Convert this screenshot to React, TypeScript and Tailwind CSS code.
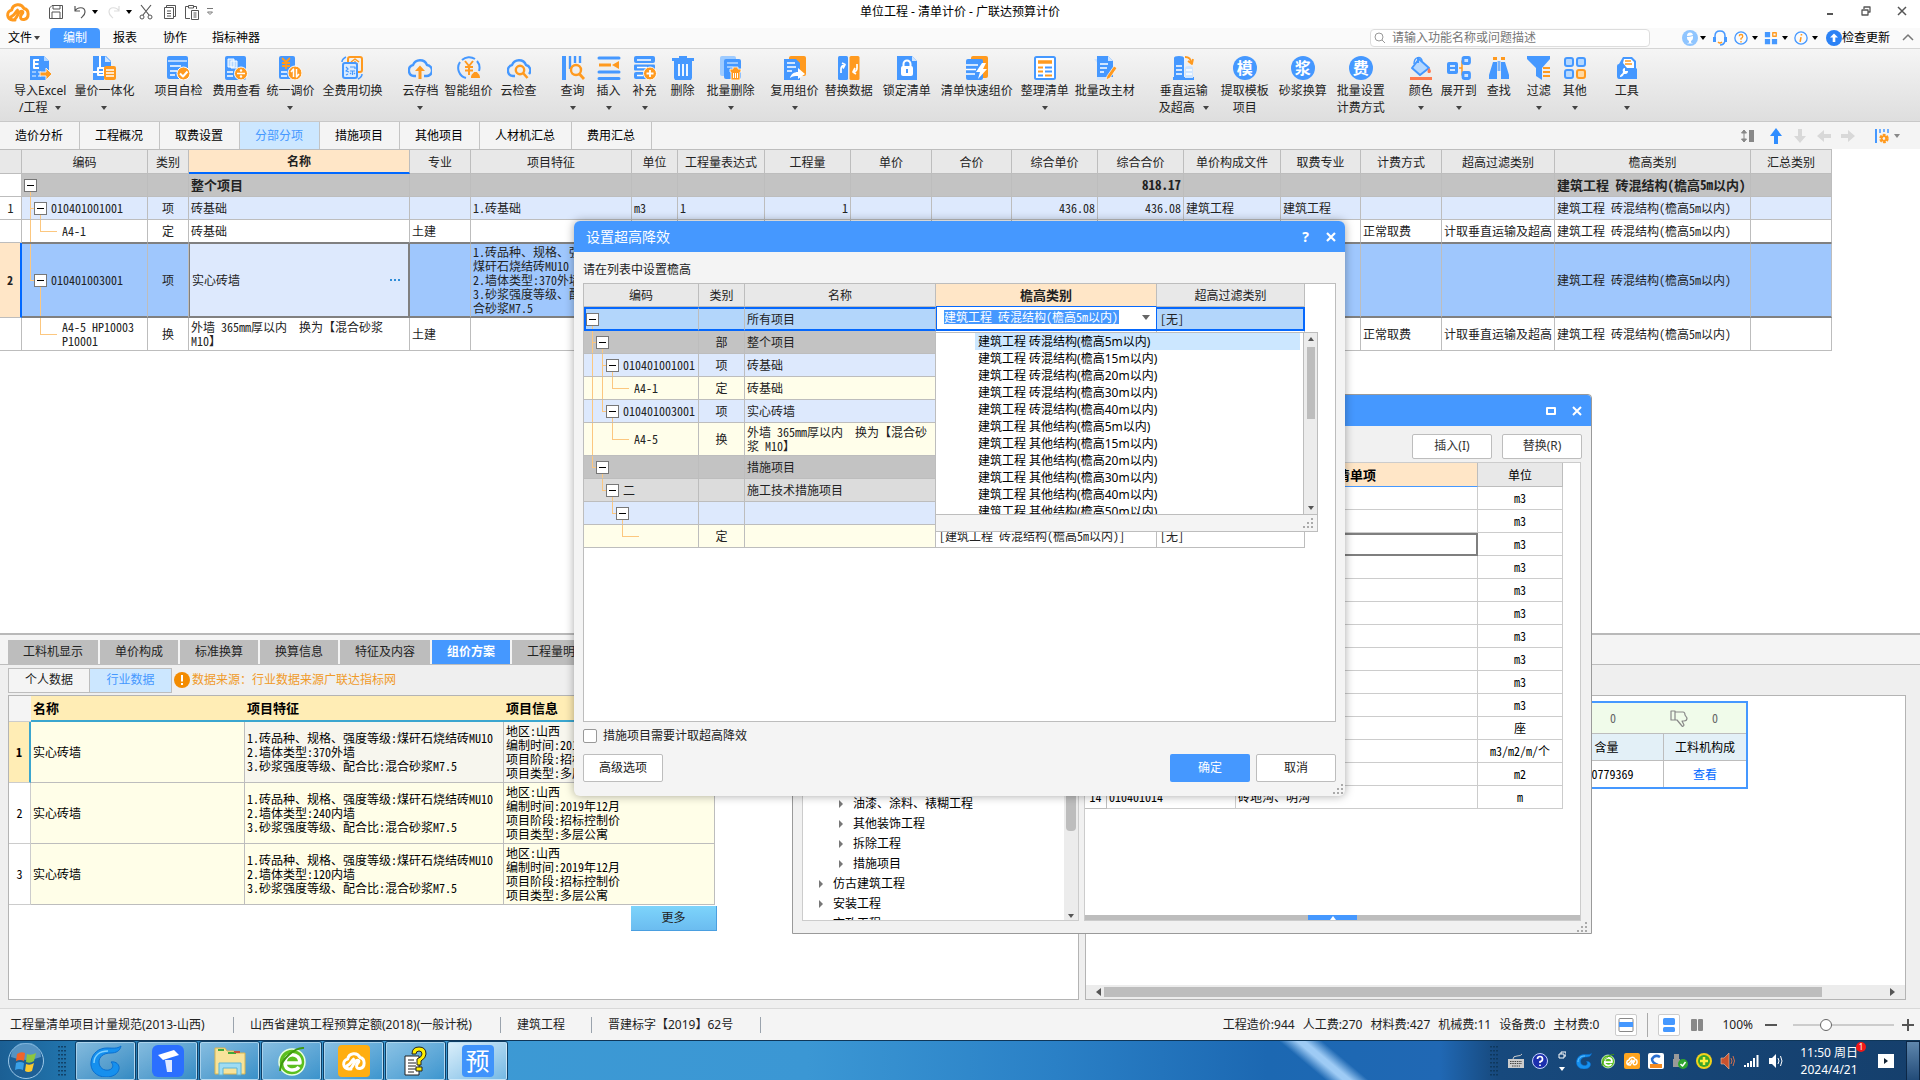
import { ReactNode } from 'react'

const BLUE = '#4598ff'
const ORANGE = '#ff9a1f'

const Caret = ({ className = 'text-[#444]' }: { className?: string }) => (
  <svg viewBox="0 0 6 4" className={`h-1 w-1.5 shrink-0 ${className}`}>
    <path d="M0 0h6L3 4z" fill="currentColor" />
  </svg>
)

const Svg = ({
  children,
  className = 'size-6',
  box = '0 0 24 24',
}: {
  children: ReactNode
  className?: string
  box?: string
}) => (
  <svg
    viewBox={box}
    className={`shrink-0 ${className}`}
    fill="none"
    strokeLinejoin="round"
  >
    {children}
  </svg>
)

const CloudMark = ({
  className,
  color = ORANGE,
}: {
  className?: string
  color?: string
}) => (
  <Svg className={className} box="0 0 24 20">
    <path
      d="M9 18H6.500a5 5 0 0 1-.8-9.900A6.500 6.500 0 0 1 18 6.500c5.500 1 5.500 10 0 11-3.500.5-4.500-2.500-2.500-5 1-1.200 2-2 1-3-1.300-1-3 .5-4 2-1.500 2.500-2.500 6.500-5.500 6.500-2.500 0-3-3-1-3.800 2-.8 3.500-4 5.500-6"
      stroke={color}
      strokeWidth="3"
      strokeLinecap="round"
    />
  </Svg>
)

const Round = ({ char }: { char: string }) => (
  <span className="flex size-6 items-center justify-center rounded-full bg-[#4598ff] text-base leading-6 font-bold text-white">
    {char}
  </span>
)

const ribbonIcons: Record<string, ReactNode> = {
  excel: (
    <Svg>
      <path d="M2 0h14l5 5v14l-3 5H2z" fill={BLUE} />
      <path d="M16 0v5h5z" fill="#b5d8ff" />
      <path d="M11 4H6v8h5M6 8h4.500" stroke="#fff" strokeWidth="2" />
      <path d="M4 16h4M4 20h4M10 16h3M10 20h3" stroke="#b5d8ff" strokeWidth="1.500" />
      <path d="M12 16h6v-4l6 6-6 6v-4h-6z" fill={ORANGE} stroke="#eee" />
    </Svg>
  ),
  both: (
    <Svg>
      <path d="M1 0h13l5 5v6h-7v13H1z" fill={BLUE} />
      <path d="M8 0v12M1 16h10M6 12h6v7H6z" stroke="#fff" strokeWidth="2" />
      <path d="M13 0v6h6z" fill="#cfe5ff" />
      <rect x="12" y="10" width="12" height="14" rx="2" fill={ORANGE} />
      <path d="M14 14h8M14 17h8M14 20h8" stroke="#fff" strokeWidth="1.500" />
    </Svg>
  ),
  check: (
    <Svg>
      <rect x="1" width="21" height="23" rx="2" fill={BLUE} />
      <path d="M2 5h19" stroke="#d9eaff" strokeWidth="1.500" />
      <path d="M4 10h11M4 15h7M4 19h5" stroke="#fff" strokeWidth="1.500" />
      <circle cx="17.500" cy="17.500" r="6.500" fill={ORANGE} stroke="#fff" />
      <path d="m14 17.500 3 3 4.500-5" stroke="#fff" strokeWidth="2" />
    </Svg>
  ),
  view: (
    <Svg>
      <rect x="1" width="21" height="24" rx="2" fill={BLUE} />
      <path d="M4 3h6v8H4zM7 5h6v7H7z" fill="#b5d8ff" stroke="#fff" />
      <path d="M3 16h6M3 20h6" stroke="#fff" strokeWidth="1.500" />
      <circle cx="17" cy="17.500" r="6.500" fill={ORANGE} stroke="#fff" />
      <path d="M13 17.500h8" stroke="#fff" strokeWidth="1.500" />
      <circle cx="17" cy="14.500" r="1.200" fill="#fff" />
      <circle cx="17" cy="20.500" r="1.200" fill="#fff" />
    </Svg>
  ),
  adjust: (
    <Svg>
      <rect x="1" width="16" height="23" rx="2" fill={BLUE} />
      <path d="m4 2 4 4 4-4M8 6v7M4 7h8M4 10h8" stroke={ORANGE} strokeWidth="1.800" />
      <path d="M3 16h6M3 20h6" stroke="#fff" strokeWidth="1.500" />
      <circle cx="17" cy="17" r="7" fill={ORANGE} stroke="#fff" />
      <path d="M15.500 21v-8l-2.500 3M18.500 13v8l2.500-3" stroke="#fff" strokeWidth="1.500" />
    </Svg>
  ),
  swap: (
    <Svg>
      <rect x="8" y="1" width="14" height="15" rx="2" stroke={ORANGE} strokeWidth="2" />
      <path d="m11 6 4-3 4 3M12 8h6M15 5v5" stroke={ORANGE} strokeWidth="1.500" />
      <rect x="3" y="7" width="14" height="15" rx="2" fill="#d9ebff" stroke={BLUE} strokeWidth="2" />
      <path d="M6 11l2 2-2 2 3 1M6 19l2-1M10 11h5v2M10 15h5M12.500 15v4M10 18l1-1M15 18l-1-1" stroke={BLUE} strokeWidth="1.200" />
      <path d="M2 6c0-2 2-4 4-5M22 18c0 2-2 4-4 5" stroke={BLUE} strokeWidth="1.500" />
    </Svg>
  ),
  cloudUp: (
    <Svg>
      <path d="M8 20H6A5.500 5.500 0 0 1 5 9.200 7.500 7.500 0 0 1 19 9a5.500 5.500 0 0 1-1 11h-2" stroke={BLUE} strokeWidth="2.400" />
      <path d="M12 9.500 17 15h-3.500v8h-3v-8H7z" fill={ORANGE} />
    </Svg>
  ),
  smart: (
    <Svg>
      <path d="M9 22A10.500 10.500 0 0 1 3 6M5 4a10.500 10.500 0 0 1 13-1M20 5a10.500 10.500 0 0 1 2 10" stroke={BLUE} strokeWidth="2" />
      <path d="m8 5 4 5 4-5M12 10v9M8 11h8M8 14.500h8" stroke={ORANGE} strokeWidth="2" />
      <path d="M14 22c0-4 2-4 3-6h3c1 2 3 2 3 6z" fill={ORANGE} />
    </Svg>
  ),
  cloudFind: (
    <Svg>
      <path d="M8 20H6A5.500 5.500 0 0 1 5 9.200 7.500 7.500 0 0 1 19 9a5.500 5.500 0 0 1 3 9" stroke={BLUE} strokeWidth="2.400" />
      <circle cx="13" cy="14" r="4.200" stroke={ORANGE} strokeWidth="2.400" />
      <path d="m16 17 4.500 5" stroke={ORANGE} strokeWidth="2.600" />
    </Svg>
  ),
  query: (
    <Svg>
      <path d="M3 0v24" stroke={BLUE} strokeWidth="4" />
      <path d="M9 0v13M14 0v7M19 0v7" stroke={BLUE} strokeWidth="2.400" />
      <circle cx="15" cy="14" r="5" stroke={ORANGE} strokeWidth="2.400" />
      <path d="m18.500 18 4.500 5" stroke={ORANGE} strokeWidth="2.800" />
    </Svg>
  ),
  insert: (
    <Svg>
      <path d="M2 2h20M2 16h20M2 22.500h20" stroke={BLUE} strokeWidth="3" strokeLinecap="round" />
      <path d="M2 9h12" stroke={ORANGE} strokeWidth="3" />
      <path d="m15 9 7-4v8z" fill={ORANGE} />
    </Svg>
  ),
  supply: (
    <Svg>
      <rect x="1" width="21" height="7" rx="2" fill={BLUE} />
      <rect x="1" y="8.500" width="21" height="6" rx="1" fill={BLUE} />
      <rect x="1" y="16" width="14" height="7" rx="2" fill={BLUE} />
      <path d="M4 4h14M4 11.500h10M4 19.500h6" stroke="#fff" strokeWidth="1.300" />
      <circle cx="17" cy="17.500" r="6.500" fill={ORANGE} stroke="#fff" />
      <path d="M13.500 17.500h7M17 14v7" stroke="#fff" strokeWidth="1.800" />
    </Svg>
  ),
  trash: (
    <Svg>
      <path d="M1 2h7V0h8v2h7v3H1zM3 5h18v17l-1 2H4l-1-2z" fill={BLUE} />
      <path d="M8 8v12M12 8v12M16 8v12" stroke="#fff" strokeWidth="1.800" />
    </Svg>
  ),
  trashMany: (
    <Svg>
      <rect x="1" width="16" height="20" rx="2" fill="#9ecbff" />
      <rect x="5" y="3" width="17" height="20" rx="2" fill={BLUE} />
      <path d="M8 7h11M8 11h6" stroke="#b5d8ff" strokeWidth="1.500" />
      <path d="M11 13h3v-2h5v2h3v3h-1v8h-9v-8h-1z" fill={ORANGE} stroke="#fff" strokeWidth=".8" />
      <path d="M14.500 17v5M16.500 17v5M18.500 17v5" stroke="#fff" />
    </Svg>
  ),
  reuse: (
    <Svg>
      <rect x="6" width="17" height="20" rx="2" fill={ORANGE} />
      <path d="M1 3h12l4 4v17H1z" fill={BLUE} />
      <path d="M4 7h8M4 11h9M4 15h5" stroke="#fff" strokeWidth="1.500" />
      <path d="M7 22c1-4 4-6 8-6v-4l7 6-7 5v-3c-3 0-5 0-8 2z" fill="#fff" />
    </Svg>
  ),
  replace: (
    <Svg>
      <rect x="1" width="10" height="24" rx="1.500" fill={BLUE} />
      <rect x="12.500" width="10" height="24" rx="1.500" fill={ORANGE} />
      <path d="M4 17v-4q0-3 3-4M5 7l3 1.500-2 4M20 8v4q0 3-3 4M19 18l-3-2 2-4" stroke="#fff" strokeWidth="1.700" />
    </Svg>
  ),
  lock: (
    <Svg>
      <path d="M2 0h15l5 5v19H2z" fill={BLUE} />
      <path d="M17 0v5h5z" fill="#cfe5ff" />
      <rect x="6" y="10" width="12" height="10" rx="2" fill="#fff" />
      <path d="M8.500 11V8a3.500 3.500 0 0 1 7 0v3" stroke="#fff" strokeWidth="2" />
      <path d="M12 13v4" stroke={BLUE} strokeWidth="2" />
    </Svg>
  ),
  fast: (
    <Svg>
      <rect x="6" width="17" height="22" rx="2" fill={ORANGE} />
      <rect x="1" y="3" width="17" height="21" rx="2" fill={BLUE} />
      <path d="M1 9h12M1 13.500h10M1 18h9" stroke="#fff" strokeWidth="1.500" />
      <path d="m17 7-6 9h4l-2 7 9-10h-4l3-6z" fill="#fff" />
    </Svg>
  ),
  tidy: (
    <Svg>
      <rect x="2" y="1" width="20" height="22" rx="1.500" fill="#fff" stroke={BLUE} strokeWidth="2" />
      <path d="M5 6h14" stroke={ORANGE} strokeWidth="3.500" />
      <path d="M5 11.500h5M5 15.500h5M12 19.500h7" stroke={ORANGE} strokeWidth="1.800" />
      <path d="M12 11.500h7M12 15.500h7M5 19.500h5" stroke={BLUE} strokeWidth="1.800" />
    </Svg>
  ),
  edit: (
    <Svg>
      <path d="M1 3h3v21h12v-3" fill="#cfe5ff" />
      <path d="M4 0h11l5 5v16H4z" fill={BLUE} />
      <path d="M15 0v5h5z" fill="#cfe5ff" />
      <path d="M7 8h8M7 12h7M7 16h4" stroke="#fff" strokeWidth="1.500" />
      <path d="m21 10 3 2-7 10-4 2 1-4z" fill={ORANGE} stroke="#fff" strokeWidth=".7" />
    </Svg>
  ),
  vertical: (
    <Svg>
      <path d="M2 2q0-2 5-2t5 2v20H2zM1 21h21v3H1z" fill={BLUE} />
      <path d="M4 10h6M4 14h6M4 18h6" stroke="#fff" strokeWidth="1.500" />
      <path d="M13 12q0-2 4-2t4 2v10h-8z" fill="#cfe5ff" />
      <path d="M14 14h6M14 18h6" stroke="#fff" strokeWidth="1.500" />
      <path d="M13 1c4 0 6 2 6 6M16 5l4 3 1-5" stroke={ORANGE} strokeWidth="1.800" />
    </Svg>
  ),
  mo: <Round char="模" />,
  jiang: <Round char="浆" />,
  fei: <Round char="费" />,
  paint: (
    <Svg>
      <path d="M9 1v6M10 3l10 9-9 7-8-7z" fill="#b5d8ff" stroke={BLUE} strokeWidth="2" />
      <path d="M5 8c0-8 8-8 8-3" stroke={BLUE} strokeWidth="1.500" />
      <path d="M20 12c3 3 2 5 0 5s-2-2 0-5z" fill="#ff7a4d" />
      <path d="M1 22.500h22" stroke="#ff7a4d" strokeWidth="3" />
    </Svg>
  ),
  expand: (
    <Svg>
      <path d="M12 12h3V5h3M15 12v7h3" stroke={ORANGE} strokeWidth="1.500" />
      <rect y="6" width="11" height="12" rx="2" fill={BLUE} />
      <path d="M3 10h5M3 14h5" stroke="#fff" strokeWidth="1.300" />
      <rect x="16" y="1.500" width="6.500" height="6" rx="1" fill="#cfe5ff" stroke={BLUE} strokeWidth="2.800" />
      <rect x="16" y="16.500" width="6.500" height="6" rx="1" fill="#cfe5ff" stroke={BLUE} strokeWidth="2.800" />
    </Svg>
  ),
  find: (
    <Svg>
      <path d="M6 6h4v17H2v-4zM14 6h4l4 13v4h-8z" fill={BLUE} />
      <path d="M11.200 5v10M12.800 5v10" stroke={BLUE} />
      <path d="M6 2.500h4M14 2.500h4" stroke={ORANGE} strokeWidth="3" />
    </Svg>
  ),
  filter: (
    <Svg>
      <path d="M0 0h23v3l-8 9v12l-6-4v-8L0 3z" fill={BLUE} />
      <path d="M16 12h7M16 16h7M16 20h7" stroke={ORANGE} strokeWidth="2" />
    </Svg>
  ),
  other: (
    <Svg>
      <g fill="#b5d8ff" stroke={BLUE} strokeWidth="2">
        <rect x="2" y="2" width="8" height="8" rx="2" />
        <rect x="14" y="2" width="8" height="8" rx="2" />
        <rect x="2" y="14" width="8" height="8" rx="2" />
      </g>
      <rect x="14" y="14" width="8" height="8" rx="2" fill="#ffd9a3" stroke={ORANGE} strokeWidth="2" />
    </Svg>
  ),
  tools: (
    <Svg>
      <path d="M8 1h9l4 4v7l1 1v10H4q-2 0-2-3V10q0-2 2-2z" fill={BLUE} />
      <path d="M9 3h7l3 3v6h-7l-4-5z" fill="#fff" />
      <path d="M10 5h6M10 8h7" stroke={ORANGE} strokeWidth="1.500" />
      <path d="M5 21c0-3 2-2 3-5-1-2 0-4 2-4v3h3c0 3-2 3-4 3-1 2-2 3-4 3z" fill="#fff" />
    </Svg>
  ),
}

type RibbonItem = {
  icon: string
  label: string
  second?: string
  menu?: boolean
  gap: string
}

const ribbon: RibbonItem[] = [
  { icon: 'excel', label: '导入Excel', second: '/工程', menu: true, gap: 'ml-3.5' },
  { icon: 'both', label: '量价一体化', menu: true, gap: 'ml-2' },
  { icon: 'check', label: '项目自检', gap: 'ml-5' },
  { icon: 'view', label: '费用查看', gap: 'ml-2.5' },
  { icon: 'adjust', label: '统一调价', menu: true, gap: 'ml-1.5' },
  { icon: 'swap', label: '全费用切换', gap: 'ml-2' },
  { icon: 'cloudUp', label: '云存档', menu: true, gap: 'ml-5' },
  { icon: 'smart', label: '智能组价', gap: 'ml-1.5' },
  { icon: 'cloudFind', label: '云检查', gap: 'ml-2' },
  { icon: 'query', label: '查询', menu: true, gap: 'ml-6' },
  { icon: 'insert', label: '插入', menu: true, gap: 'ml-3' },
  { icon: 'supply', label: '补充', menu: true, gap: 'ml-3' },
  { icon: 'trash', label: '删除', gap: 'ml-3.5' },
  { icon: 'trashMany', label: '批量删除', menu: true, gap: 'ml-3' },
  { icon: 'reuse', label: '复用组价', menu: true, gap: 'ml-4' },
  { icon: 'replace', label: '替换数据', gap: 'ml-1.5' },
  { icon: 'lock', label: '锁定清单', gap: 'ml-2.5' },
  { icon: 'fast', label: '清单快速组价', gap: 'ml-2.5' },
  { icon: 'tidy', label: '整理清单', menu: true, gap: 'ml-2' },
  { icon: 'edit', label: '批量改主材', gap: 'ml-1.5' },
  { icon: 'vertical', label: '垂直运输', second: '及超高', menu: true, gap: 'ml-6' },
  { icon: 'mo', label: '提取模板', second: '项目', gap: 'ml-3' },
  { icon: 'jiang', label: '砂浆换算', gap: 'ml-2.5' },
  { icon: 'fei', label: '批量设置', second: '计费方式', gap: 'ml-2.5' },
  { icon: 'paint', label: '颜色', menu: true, gap: 'ml-6' },
  { icon: 'expand', label: '展开到', menu: true, gap: 'ml-2' },
  { icon: 'find', label: '查找', gap: 'ml-2.5' },
  { icon: 'filter', label: '过滤', menu: true, gap: 'ml-4' },
  { icon: 'other', label: '其他', menu: true, gap: 'ml-3' },
  { icon: 'tools', label: '工具', menu: true, gap: 'ml-7' },
]

const TitleBar = () => (
  <header className="relative flex h-7 shrink-0 items-center bg-white pb-1 pl-1.5 text-[#555]">
    <CloudMark className="h-5 w-6" />
    <div className="ml-[18px] flex items-center">
      <button aria-label="保存">
        <Svg className="size-4" box="0 0 16 16">
          <path d="M1.500 4 4 1.500h10.500v13h-13zM4 14V8h8v6M5 2v3h7V2" stroke="currentColor" />
        </Svg>
      </button>
      <button aria-label="撤销" className="ml-2 flex items-center gap-1">
        <Svg className="size-4" box="0 0 16 16">
          <path d="M3 2v5h5M3 7c2-4 10-5 10 1 0 3-2 4-4 6" stroke="currentColor" strokeWidth="1.200" />
        </Svg>
        <Caret className="text-black" />
      </button>
      <button aria-label="重做" className="ml-2 flex items-center gap-1">
        <Svg className="size-4 text-[#ddd]" box="0 0 16 16">
          <path d="M13 2v5H8M13 7c-2-4-10-5-10 1 0 3 2 4 4 6" stroke="currentColor" strokeWidth="1.200" />
        </Svg>
        <Caret className="text-black" />
      </button>
      <button aria-label="剪切" className="ml-1.5">
        <Svg className="size-4" box="0 0 16 16">
          <path d="M3 1l8 10M13 1 5 11" stroke="currentColor" strokeWidth="1.200" />
          <circle cx="4" cy="13" r="2" stroke="currentColor" />
          <circle cx="12" cy="13" r="2" stroke="currentColor" />
        </Svg>
      </button>
      <button aria-label="复制" className="ml-2">
        <Svg className="size-4" box="0 0 16 16">
          <path d="M4.500 3V1.500h9v11H12M2.500 3.500h9v11h-9zM5 7h4M5 9.500h4M5 12h4" stroke="currentColor" />
        </Svg>
      </button>
      <button aria-label="粘贴" className="ml-1.5">
        <Svg className="size-4" box="0 0 16 16">
          <path d="M6 14.500H1.500v-12H4m6 0h2.500V5M4.500 4V1.500h5V4zM7.500 6.500h7v9h-7zM9.500 9h3M9.500 11h3M9.500 13h3" stroke="currentColor" />
        </Svg>
      </button>
      <button aria-label="更多工具" className="ml-1">
        <Svg className="size-3" box="0 0 12 12">
          <path d="M3 2.500h6M3.500 6 6 8.500 8.500 6z" stroke="#777" />
        </Svg>
      </button>
    </div>
    <h1 className="pointer-events-none absolute inset-x-0 top-1 text-center text-black">
      单位工程 - 清单计价 - 广联达预算计价
    </h1>
    <div className="ml-auto flex items-center gap-6 pr-3 pb-0.5">
      <button aria-label="最小化">
        <Svg className="size-3" box="0 0 12 12">
          <path d="M3 9h6" stroke="currentColor" strokeWidth="2" />
        </Svg>
      </button>
      <button aria-label="还原">
        <Svg className="size-3" box="0 0 12 12">
          <path d="M4 4V2h6v5H8M2 5h6v5H2z" stroke="currentColor" strokeWidth="1.300" />
        </Svg>
      </button>
      <button aria-label="关闭">
        <Svg className="size-3" box="0 0 12 12">
          <path d="m2 2 8 8M10 2l-8 8" stroke="currentColor" strokeWidth="1.500" />
        </Svg>
      </button>
    </div>
  </header>
)

const MenuBar = () => (
  <nav className="flex h-[21px] shrink-0 items-center border-b border-[#d5d5d5] bg-[#fafafa] text-black">
    <button className="flex w-[50px] items-center gap-0.5 pl-2">
      文件 <Caret />
    </button>
    <button className="h-5 w-[50px] rounded-t-sm bg-[#4598ff] text-white">编制</button>
    <button className="w-[50px]">报表</button>
    <button className="w-[50px]">协作</button>
    <button className="ml-3">指标神器</button>
    <div className="ml-auto flex items-center">
      <label className="flex h-[18px] w-[280px] items-center gap-1.5 rounded-sm border border-[#ddd] bg-white pl-[3px] text-[#999]">
        <Svg className="size-3" box="0 0 12 12">
          <circle cx="5" cy="5" r="4" stroke="currentColor" />
          <path d="m8 8 3 3" stroke="currentColor" />
        </Svg>
        <input
          type="search"
          aria-label="搜索功能"
          placeholder="请输入功能名称或问题描述"
          className="w-full bg-transparent outline-none placeholder:text-[#777]"
        />
      </label>
      <button aria-label="用户" className="ml-8 flex items-center gap-0.5">
        <Svg className="size-4" box="0 0 16 16">
          <circle cx="8" cy="8" r="8" fill="#8fc5ff" />
          <path d="M5 6q0-3.500 3-3.500T11 6v2q0 2-2 3v1.500l2 1H5l2-1V11Q5 10 5 8z" fill="#fff" />
          <path d="M5 6.500q3 0 6-1" stroke="#8fc5ff" />
        </Svg>
        <Caret className="text-black" />
      </button>
      <button aria-label="客服" className="ml-1.5">
        <Svg className="size-4" box="0 0 16 16">
          <path d="M3 9V6q0-5 5-5t5 5v5q-1 4-5 4" stroke={BLUE} strokeWidth="1.500" />
          <path d="M1 7h3v5H1zM12 7h3v5h-3z" fill={BLUE} />
          <path d="M6 12q2 2 4 0" stroke={ORANGE} strokeWidth="1.500" />
        </Svg>
      </button>
      <button aria-label="帮助" className="ml-1.5 flex items-center gap-1">
        <Svg className="size-3.5" box="0 0 16 16">
          <circle cx="8" cy="8" r="7" stroke={BLUE} strokeWidth="1.500" />
          <path d="M6 6q0-2 2-2t2 2-2 2.500V10M8 11.500V13" stroke={ORANGE} strokeWidth="1.500" />
        </Svg>
        <Caret className="text-black" />
      </button>
      <button aria-label="应用" className="ml-1.5 flex items-center gap-1">
        <Svg className="size-3.5" box="0 0 16 16">
          <path d="M1 1h6v6H1zM1 9h6v6H1zM9 9h6v6H9z" fill={BLUE} />
          <path d="M10 2h4v4h-4z" stroke={ORANGE} strokeWidth="1.500" />
        </Svg>
        <Caret className="text-black" />
      </button>
      <button aria-label="信息" className="ml-1.5 flex items-center gap-1">
        <Svg className="size-3.5" box="0 0 16 16">
          <circle cx="8" cy="8" r="7" stroke={BLUE} strokeWidth="1.500" />
          <path d="M8.500 3.500V5M8 7l-1 5.500" stroke={ORANGE} strokeWidth="1.800" />
        </Svg>
        <Caret className="text-black" />
      </button>
      <button className="ml-2 flex items-center">
        <Svg className="size-4" box="0 0 16 16">
          <circle cx="8" cy="8" r="8" fill="#2c82f5" />
          <path d="m8 3.500 4 4H9.300V12H6.700V7.500H4z" fill="#fff" />
        </Svg>
        检查更新
      </button>
      <button aria-label="收起" className="mr-1.5 ml-3">
        <Svg className="size-3" box="0 0 12 12">
          <path d="m1 8 5-5 5 5" stroke="#777" strokeWidth="1.500" />
        </Svg>
      </button>
    </div>
  </nav>
)

const Ribbon = () => (
  <div className="flex h-[73px] shrink-0 items-start border-b border-[#c8c8c8] bg-linear-to-b from-[#f5f5f5] to-[#dedede] pt-[7px]">
    {ribbon.map((item) => (
      <button
        key={item.label}
        className={`flex shrink-0 flex-col items-center leading-[17px] whitespace-nowrap text-[#222] ${item.gap}`}
      >
        {ribbonIcons[item.icon]}
        <span className="mt-0.5">{item.label}</span>
        {(item.second || item.menu) && (
          <span className="flex h-[17px] items-center gap-2">
            {item.second}
            {item.menu && <Caret />}
          </span>
        )}
      </button>
    ))}
  </div>
)

const pages = ['造价分析', '工程概况', '取费设置', '分部分项', '措施项目', '其他项目', '人材机汇总', '费用汇总']

const PageTabs = () => (
  <div className="flex h-[27px] shrink-0 items-stretch bg-[#f4f4f4] text-black">
    {pages.map((page) => (
      <button
        key={page}
        className={`border-r border-[#c4c4c4] pr-4 pl-[15px] ${
          page === '分部分项' ? 'bg-[#cce7ff] text-[#4598ff]' : ''
        }`}
      >
        {page}
      </button>
    ))}
    <div className="ml-auto flex items-center gap-2 pr-5">
      <button aria-label="行高">
        <Svg className="size-4" box="0 0 16 16">
          <path d="M4 2v12M1.500 5 4 2l2.500 3zM1.500 11 4 14l2.500-3z" stroke="#888" fill="#888" />
          <path d="M9 2h5v12H9z" fill="#888" />
        </Svg>
      </button>
      <button aria-label="上移" className="ml-1">
        <Svg className="size-4" box="0 0 16 16">
          <path d="m8 0 6 8h-4v8H6V8H2z" fill="#2f8dff" />
        </Svg>
      </button>
      <button aria-label="下移">
        <Svg className="size-4" box="0 0 16 16">
          <path d="m8 15 6-7h-4V1H6v7H2z" fill="#d8d8d8" />
        </Svg>
      </button>
      <button aria-label="升级">
        <Svg className="size-4" box="0 0 16 16">
          <path d="m1 8 7-6v4h7v4H8v4z" fill="#d8d8d8" />
        </Svg>
      </button>
      <button aria-label="降级">
        <Svg className="size-4" box="0 0 16 16">
          <path d="M15 8 8 2v4H1v4h7v4z" fill="#d8d8d8" />
        </Svg>
      </button>
      <button aria-label="列设置" className="ml-2.5 flex items-center gap-1">
        <Svg className="size-4" box="0 0 16 16">
          <path d="M2 1v14" stroke={BLUE} strokeWidth="2" />
          <path d="M6 1v4M10 1v3M14 1v4" stroke={BLUE} strokeWidth="1.500" />
          <circle cx="10" cy="10.500" r="3" stroke={ORANGE} strokeWidth="3.500" strokeDasharray="2.200 1" />
          <circle cx="10" cy="10.500" r="2.500" stroke={ORANGE} strokeWidth="1.500" />
        </Svg>
        <Caret className="text-[#888]" />
      </button>
    </div>
  </div>
)

type Guide = 'none' | 'full' | 'tee' | 'corner'

interface TreeCodeProps {
  guides: Guide[]
  leaf?: boolean
  children?: ReactNode
}

// One 10px slot per level; the branch line of a level runs down the slot's left edge
const TreeCode = ({ guides, leaf, children }: TreeCodeProps) => (
  <div className="flex h-full items-stretch pl-2">
    {guides.map((guide, i) => (
      <span
        key={i}
        className={`flex shrink-0 flex-col ${leaf && i === guides.length - 1 ? 'w-[17px]' : 'w-2.5'}`}
      >
        <span
          className={`flex-1 border-[#fcc77f] ${guide === 'none' ? '' : 'border-l'} ${
            guide === 'tee' || guide === 'corner' ? 'border-b' : ''
          }`}
        />
        <span
          className={`flex-1 border-[#fcc77f] ${guide === 'full' || guide === 'tee' ? 'border-l' : ''}`}
        />
      </span>
    ))}
    {!leaf && (
      <span className="-ml-1.5 flex w-[13px] shrink-0 flex-col items-center">
        <span className="flex-1" />
        <button
          aria-label="折叠"
          className="flex size-[13px] shrink-0 items-center justify-center border border-[#777] bg-white"
        >
          <span className="h-px w-[7px] bg-black" />
        </button>
        <span className="flex-1 border-l border-[#fcc77f]" />
      </span>
    )}
    <span className={`self-center leading-[14px] ${leaf ? 'ml-[5px]' : 'ml-1'}`}>{children}</span>
  </div>
)

type Col = { key: string; title: string; width: string; align?: string }

const cols: Col[] = [
  { key: 'no', title: '', width: 'w-[22px]', align: 'text-center' },
  { key: 'code', title: '编码', width: 'w-[126px]' },
  { key: 'kind', title: '类别', width: 'w-[41px]', align: 'text-center' },
  { key: 'name', title: '名称', width: 'w-[221px]' },
  { key: 'major', title: '专业', width: 'w-[61px]' },
  { key: 'feature', title: '项目特征', width: 'w-[161px]' },
  { key: 'unit', title: '单位', width: 'w-[46px]' },
  { key: 'expr', title: '工程量表达式', width: 'w-[87px]' },
  { key: 'qty', title: '工程量', width: 'w-[86px]', align: 'text-right' },
  { key: 'price', title: '单价', width: 'w-[81px]' },
  { key: 'total', title: '合价', width: 'w-[80px]' },
  { key: 'fullPrice', title: '综合单价', width: 'w-[86px]', align: 'text-right' },
  { key: 'fullTotal', title: '综合合价', width: 'w-[86px]', align: 'text-right' },
  { key: 'file', title: '单价构成文件', width: 'w-[97px]' },
  { key: 'feeMajor', title: '取费专业', width: 'w-[80px]' },
  { key: 'feeWay', title: '计费方式', width: 'w-[81px]' },
  { key: 'overFilter', title: '超高过滤类别', width: 'w-[113px]' },
  { key: 'eaves', title: '檐高类别', width: 'w-[196px]' },
  { key: 'sumKind', title: '汇总类别', width: 'w-[81px]' },
]

const EAVES = '建筑工程 砖混结构(檐高5m以内)'

type Row = {
  look: string
  height: string
  selected?: boolean
  cells: Record<string, ReactNode>
}

const rows: Row[] = [
  {
    look: 'bg-[#c3c3c3] font-bold text-[13px]',
    height: 'h-[23px]',
    cells: {
      code: <TreeCode guides={[]} />,
      name: '整个项目',
      fullTotal: '818.17',
      eaves: EAVES,
    },
  },
  {
    look: 'bg-[#dde9fd]',
    height: 'h-[23px]',
    cells: {
      no: '1',
      code: <TreeCode guides={['tee']}>010401001001</TreeCode>,
      kind: '项',
      name: '砖基础',
      feature: '1.砖基础',
      unit: 'm3',
      expr: '1',
      qty: '1',
      fullPrice: '436.08',
      fullTotal: '436.08',
      file: '建筑工程',
      feeMajor: '建筑工程',
      eaves: EAVES,
    },
  },
  {
    look: 'bg-white border-b-[#808080]!',
    height: 'h-[23px]',
    cells: {
      code: <TreeCode guides={['full', 'corner']} leaf>A4-1</TreeCode>,
      kind: '定',
      name: '砖基础',
      major: '土建',
      feeWay: '正常取费',
      overFilter: '计取垂直运输及超高',
      eaves: EAVES,
    },
  },
  {
    look: 'bg-[#9fc7fd] border-y-[#808080]! border-t border-b-2!',
    height: 'h-[75px]',
    selected: true,
    cells: {
      no: '2',
      code: <TreeCode guides={['corner']}>010401003001</TreeCode>,
      kind: '项',
      name: (
        <span className="flex items-center justify-between pr-1.5">
          实心砖墙
          <button aria-label="编辑名称" className="flex gap-0.5">
            <i className="size-0.5 bg-[#2f8dd8]" />
            <i className="size-0.5 bg-[#2f8dd8]" />
            <i className="size-0.5 bg-[#2f8dd8]" />
          </button>
        </span>
      ),
      feature: (
        <span className="block leading-[14px] whitespace-pre">
          {'1.砖品种、规格、强度等级:\n煤矸石烧结砖MU10\n2.墙体类型:370外墙\n3.砂浆强度等级、配合比:混\n合砂浆M7.5'}
        </span>
      ),
      eaves: EAVES,
    },
  },
  {
    look: 'bg-white',
    height: 'h-[33px]',
    cells: {
      code: (
        <TreeCode guides={['none', 'corner']} leaf>
          A4-5 HP10003
          <br />
          P10001
        </TreeCode>
      ),
      kind: '换',
      name: (
        <span className="block leading-[14px] whitespace-pre">
          {'外墙 365mm厚以内　换为【混合砂浆\nM10】'}
        </span>
      ),
      major: '土建',
      feeWay: '正常取费',
      overFilter: '计取垂直运输及超高',
      eaves: EAVES,
    },
  },
]

const cellLook = (row: Row, key: string) => {
  if (key === 'no') {
    return row.selected
      ? 'bg-[#ffe6c7] font-bold border-b border-[#bdbdbd] border-r-2 border-r-[#0068ff]'
      : 'bg-white border-b border-r border-[#bdbdbd]'
  }
  if (key === 'name' && row.selected) {
    return 'bg-[#dde9fd] border-2 border-t border-l border-[#808080]'
  }
  return `border-r border-b border-[#bdbdbd] ${row.look}`
}

const MainTable = () => (
  <table className="w-[1832px] table-fixed border-separate border-spacing-0 border-t border-[#bdbdbd] text-[#222] [font-family:'Noto_Sans_Mono_CJK_SC','Noto_Sans_CJK_SC',sans-serif]">
    <thead>
      <tr>
        {cols.map((col) => (
          <th
            key={col.key}
            className={`h-6 border-r border-[#bdbdbd] p-0 ${col.width} ${
              col.key === 'name'
                ? 'border-b-2 border-b-[#0068ff] bg-[#ffe6c7] font-bold'
                : 'border-b bg-[#e8e8e8] font-normal'
            }`}
          >
            {col.title}
          </th>
        ))}
      </tr>
    </thead>
    <tbody>
      {rows.map((row, i) => (
        <tr key={i}>
          {cols.map((col) => (
            <td
              key={col.key}
              className={`overflow-hidden py-0 whitespace-nowrap ${row.height} ${col.align ?? ''} ${
                ['code', 'no', 'kind'].includes(col.key) ? 'px-0' : 'px-0.5'
              } ${cellLook(row, col.key)}`}
            >
              {row.cells[col.key]}
            </td>
          ))}
        </tr>
      ))}
    </tbody>
  </table>
)

const detailTabs = ['工料机显示', '单价构成', '标准换算', '换算信息', '特征及内容', '组价方案', '工程量明细']

const plans = [
  { wall: '370外墙', info: '地区:山西\n编制时间:2019年12月\n项目阶段:招标控制价\n项目类型:多层公寓' },
  { wall: '240内墙', info: '地区:山西\n编制时间:2019年12月\n项目阶段:招标控制价\n项目类型:多层公寓' },
  { wall: '120内墙', info: '地区:山西\n编制时间:2019年12月\n项目阶段:招标控制价\n项目类型:多层公寓' },
]

const PlanTable = () => (
  <table className="w-[706px] table-fixed border-separate border-spacing-0 text-black [font-family:'Noto_Sans_Mono_CJK_SC','Noto_Sans_CJK_SC',sans-serif]">
    <thead>
      <tr className="text-left text-[13px] font-bold">
        <th className="h-[26px] w-[22px] border-b border-[#ccc] bg-[#f4f4f4] p-0" />
        <th className="w-[214px] border-b-2 border-[#3ba6cf] bg-[#ffedb5] p-0 pl-0.5">名称</th>
        <th className="w-[259px] border-b-2 border-[#3ba6cf] bg-[#ffedb5] p-0 pl-0.5">项目特征</th>
        <th className="w-[211px] border-b-2 border-[#3ba6cf] bg-[#ffedb5] p-0 pl-0.5">项目信息</th>
      </tr>
    </thead>
    <tbody>
      {plans.map((plan, i) => {
        const first = i === 0
        return (
          <tr key={plan.wall}>
            <td
              className={`h-[61px] border-b border-[#ccc] p-0 text-center ${
                first ? 'border-r-2 border-r-[#3ba6cf] bg-[#ffedb5] font-bold' : 'border-r'
              }`}
            >
              {i + 1}
            </td>
            <td className="border-r border-b border-[#bdbdbd] bg-[#fffee8] p-0 pl-0.5">实心砖墙</td>
            <td
              className={`border-r border-b border-[#bdbdbd] p-0 pl-0.5 leading-[14px] whitespace-pre ${
                first ? 'bg-[#f7f6ee]' : 'bg-[#fffee8]'
              }`}
            >
              {`1.砖品种、规格、强度等级:煤矸石烧结砖MU10\n2.墙体类型:${plan.wall}\n3.砂浆强度等级、配合比:混合砂浆M7.5`}
            </td>
            <td
              className={`border-r border-b border-[#bdbdbd] p-0 pl-0.5 leading-[14px] whitespace-pre ${
                first ? 'bg-[#f7f6ee]' : 'bg-[#fffee8]'
              }`}
            >
              {plan.info}
            </td>
          </tr>
        )
      })}
    </tbody>
  </table>
)

const QuotaCard = () => (
  <table className="mt-[5px] ml-[380px] w-[282px] table-fixed border-separate border-spacing-0 border-2 border-[#4598ff] text-center text-black [font-family:'Noto_Sans_Mono_CJK_SC','Noto_Sans_CJK_SC',sans-serif]">
    <colgroup>
      <col className="w-[82px]" />
      <col className="w-[114px]" />
      <col className="w-[82px]" />
    </colgroup>
    <thead>
      <tr>
        <td className="h-[31px] border-b border-[#bdbdbd] bg-[#f0fbea]" />
        <td colSpan={2} className="border-b border-[#bdbdbd] bg-[#f0fbea] p-0 text-[#666]">
          <span className="flex items-center justify-end pr-7">
            0
            <Svg className="mr-6 ml-[54px] size-[18px]" box="0 0 18 18">
              <path d="M1 2h4v9H1zM5 3h8q2 0 2 3l2 3q0 3-3 3h-2l2 4q-1 2-2 1L7 11H5" stroke="#888" strokeWidth="1.200" />
            </Svg>
            0
          </span>
        </td>
      </tr>
      <tr className="bg-[#e3f0f7]">
        <th className="h-[27px] border-b border-[#bdbdbd]" />
        <th className="border-r border-b border-[#bdbdbd] p-0 font-normal">含量</th>
        <th className="border-b border-[#bdbdbd] p-0 font-normal">工料机构成</th>
      </tr>
    </thead>
    <tbody>
      <tr>
        <td className="h-[26px]" />
        <td className="border-r border-[#bdbdbd] p-0">0.0779369</td>
        <td className="p-0">
          <a href="#view" className="text-[#0068ff]">
            查看
          </a>
        </td>
      </tr>
    </tbody>
  </table>
)

const DetailPane = () => (
  <section className="flex h-[375px] shrink-0 flex-col border-t-2 border-[#b9b9b9] bg-[#efefef]">
    <div className="flex h-[30px] shrink-0 items-end gap-0.5 border-b border-[#bdbdbd] bg-[#f4f4f4] pl-2 text-[#222]">
      {detailTabs.map((tab) => (
        <button
          key={tab}
          className={`h-6 px-[15px] ${
            tab === '组价方案' ? 'bg-[#4598ff] font-bold text-white' : 'bg-[#bdbdbd]'
          }`}
        >
          {tab}
        </button>
      ))}
    </div>
    <div className="flex h-[30px] shrink-0 items-center pl-2">
      <button className="h-[25px] w-[82px] border border-[#bdbdbd] bg-[#f4f4f4] text-[#222]">个人数据</button>
      <button className="h-[25px] w-[82px] border border-l-0 border-[#bdbdbd] bg-[#cce7ff] text-[#4598ff]">
        行业数据
      </button>
      <Svg className="mr-0.5 ml-0.5 size-4" box="0 0 16 16">
        <circle cx="8" cy="8" r="8" fill="#f38b00" />
        <path d="M8 3v6.500M8 11v2" stroke="#fff" strokeWidth="2" />
      </Svg>
      <span className="text-[#f09a28]">数据来源：行业数据来源广联达指标网</span>
    </div>
    <div className="flex min-h-0 flex-1 gap-1.5 pr-3.5 pb-2 pl-2">
      <div className="flex w-[1071px] flex-col items-start border border-[#b4b4b4] bg-white">
        <PlanTable />
        <button className="mt-px ml-[622px] h-[25px] w-[86px] border-r border-b border-[#4a9fe0] bg-linear-to-b from-[#7dd4fb] to-[#6bbcf0] text-[#222]">
          更多
        </button>
      </div>
      <div className="flex min-w-0 flex-1 flex-col justify-between border border-[#b4b4b4] bg-white">
        <QuotaCard />
        <div className="flex h-3.5 items-center gap-0.5 bg-[#ececec] px-2.5">
          <Svg className="h-2 w-1.5" box="0 0 6 8">
            <path d="M5 0v8L0 4z" fill="#555" />
          </Svg>
          <div className="flex h-2.5 flex-1">
            <span className="w-11/12 bg-[#bdbdbd]" />
          </div>
          <Svg className="h-2 w-1.5" box="0 0 6 8">
            <path d="M1 0v8l5-4z" fill="#555" />
          </Svg>
        </div>
      </div>
    </div>
  </section>
)

const Grip = () => (
  <Svg className="size-2.5" box="0 0 10 10">
    <path d="M8 0h2v2H8zM4 4h2v2H4zM8 4h2v2H8zM0 8h2v2H0zM4 8h2v2H4zM8 8h2v2H8z" fill="#aaa" />
  </Svg>
)

const treeItems = [
  { label: '油漆、涂料、裱糊工程', sub: true },
  { label: '其他装饰工程', sub: true },
  { label: '拆除工程', sub: true },
  { label: '措施项目', sub: true },
  { label: '仿古建筑工程' },
  { label: '安装工程' },
  { label: '市政工程' },
]

const units = ['m3', 'm3', 'm3', 'm3', 'm3', 'm3', 'm3', 'm3', 'm3', 'm3', '座', 'm3/m2/m/个', 'm2', 'm']

const QueryWindow = () => (
  <section className="absolute top-[394px] left-[792px] flex h-[540px] w-[800px] flex-col rounded-tr border border-[#9a9a9a] bg-[#f1f1f1]">
    <div className="flex h-[31px] shrink-0 items-center justify-end gap-3.5 rounded-tr bg-[#4598ff] pr-2">
      <button aria-label="最大化">
        <Svg className="size-3" box="0 0 12 12">
          <path d="M2 3h8v6H2z" stroke="#fff" strokeWidth="2" />
        </Svg>
      </button>
      <button aria-label="关闭查询">
        <Svg className="size-3" box="0 0 12 12">
          <path d="m2 2 8 8M10 2l-8 8" stroke="#fff" strokeWidth="2" />
        </Svg>
      </button>
    </div>
    <div className="flex h-9 shrink-0 items-center justify-end gap-2.5 pt-1 pr-[9px] text-[#333]">
      <button className="h-[25px] w-20 rounded-xs border border-[#bdbdbd] bg-white">插入(I)</button>
      <button className="h-[25px] w-20 rounded-xs border border-[#bdbdbd] bg-white">替换(R)</button>
    </div>
    <div className="flex min-h-0 flex-1 gap-[5px] pr-2.5 pl-[9px]">
      <div className="flex w-[277px] border border-[#ccc] bg-white">
        <ul className="flex flex-1 flex-col justify-end overflow-hidden text-black">
          {treeItems.map((item) => (
            <li
              key={item.label}
              className={`flex h-5 shrink-0 items-center gap-2.5 last:-mb-3.5 ${
                item.sub ? 'pl-9' : 'pl-4'
              }`}
            >
              <Svg className="h-2 w-1" box="0 0 4 8">
                <path d="M0 0v8l4-4z" fill="#777" />
              </Svg>
              {item.label}
            </li>
          ))}
        </ul>
        <div className="flex w-3.5 flex-col items-center justify-between bg-[#ececec] pb-0.5">
          <span className="h-[368px] w-2.5 rounded-b bg-[#bdbdbd]" />
          <Caret className="text-[#555]" />
        </div>
      </div>
      <div className="flex flex-1 flex-col justify-between border border-[#ccc] bg-white">
        <table className="w-[478px] table-fixed border-separate border-spacing-0 text-center text-black [font-family:'Noto_Sans_Mono_CJK_SC','Noto_Sans_CJK_SC',sans-serif]">
          <thead>
            <tr>
              <th className="h-6 w-[22px] border-r border-b border-[#bdbdbd] bg-[#e8e8e8] p-0" />
              <th className="w-[129px] border-r border-b border-[#bdbdbd] bg-[#e8e8e8] p-0 font-normal" />
              <th className="w-[242px] border-r border-b border-[#bdbdbd] border-b-[#4598ff] bg-[#ffe6c7] p-0 text-[13px] font-bold">
                清单项
              </th>
              <th className="w-[85px] border-r border-b border-[#bdbdbd] bg-[#e8e8e8] p-0 font-normal">单位</th>
            </tr>
          </thead>
          <tbody>
            {units.map((unit, i) => (
              <tr key={i}>
                <td className="h-[23px] border-r border-b border-[#bdbdbd] p-0">{i === 13 ? '14' : ''}</td>
                <td className="border-r border-b border-[#ccc] p-0 pl-0.5 text-left">
                  {i === 13 ? '010401014' : ''}
                </td>
                <td
                  className={`p-0 pl-0.5 text-left ${
                    i === 2 ? 'border-2 border-[#7f7f7f]' : 'border-r border-b border-[#ccc]'
                  }`}
                >
                  {i === 13 ? '砖地沟、明沟' : ''}
                </td>
                <td className="border-r border-b border-[#ccc] p-0">{unit}</td>
              </tr>
            ))}
          </tbody>
        </table>
        <div className="flex h-[5px] justify-center bg-[#bdbdbd]">
          <span className="flex w-[49px] items-center justify-center bg-[#4598ff]">
            <Caret className="rotate-180 text-white" />
          </span>
        </div>
      </div>
    </div>
    <div className="flex h-3 shrink-0 items-center justify-end pr-1">
      <Grip />
    </div>
  </section>
)

const eavesOptions = [
  '建筑工程 砖混结构(檐高5m以内)',
  '建筑工程 砖混结构(檐高15m以内)',
  '建筑工程 砖混结构(檐高20m以内)',
  '建筑工程 砖混结构(檐高30m以内)',
  '建筑工程 砖混结构(檐高40m以内)',
  '建筑工程 其他结构(檐高5m以内)',
  '建筑工程 其他结构(檐高15m以内)',
  '建筑工程 其他结构(檐高20m以内)',
  '建筑工程 其他结构(檐高30m以内)',
  '建筑工程 其他结构(檐高40m以内)',
  '建筑工程 其他结构(檐高50m以内)',
]

type DialogRow = {
  look: string
  code: ReactNode
  kind?: string
  name?: ReactNode
  eaves?: string
  over?: string
  tall?: boolean
}

const dialogRows: DialogRow[] = [
  { look: 'bg-[#c3c3c3]', code: <TreeCode guides={['tee']} />, kind: '部', name: '整个项目' },
  {
    look: 'bg-[#dde9fd]',
    code: <TreeCode guides={['full', 'tee']}>010401001001</TreeCode>,
    kind: '项',
    name: '砖基础',
  },
  {
    look: 'bg-[#fffeea]',
    code: <TreeCode guides={['full', 'full', 'corner']} leaf>A4-1</TreeCode>,
    kind: '定',
    name: '砖基础',
  },
  {
    look: 'bg-[#dde9fd]',
    code: <TreeCode guides={['full', 'corner']}>010401003001</TreeCode>,
    kind: '项',
    name: '实心砖墙',
  },
  {
    look: 'bg-[#fffeea]',
    code: <TreeCode guides={['full', 'none', 'corner']} leaf>A4-5</TreeCode>,
    kind: '换',
    name: <span className="block leading-[14px] whitespace-pre">{'外墙 365mm厚以内　换为【混合砂\n浆 M10】'}</span>,
    tall: true,
  },
  { look: 'bg-[#c3c3c3]', code: <TreeCode guides={['corner']} />, name: '措施项目' },
  {
    look: 'bg-[#dcdcdc]',
    code: <TreeCode guides={['none', 'corner']}>二</TreeCode>,
    name: '施工技术措施项目',
  },
  { look: 'bg-[#dde9fd]', code: <TreeCode guides={['none', 'none', 'corner']} /> },
  {
    look: 'bg-[#fffeea]',
    code: <TreeCode guides={['none', 'none', 'none', 'corner']} leaf />,
    kind: '定',
    eaves: '[建筑工程 砖混结构(檐高5m以内)]',
    over: '[无]',
  },
]

const EavesDropdown = () => (
  <div className="absolute top-12 left-[351px] z-10 w-[383px] border border-[#bdbdbd] bg-white">
    <div className="flex h-[181px]">
      <ul
        role="listbox"
        aria-label="檐高类别"
        className="mr-[3px] flex-1 overflow-hidden pl-[39px] leading-[17px] text-black"
      >
        {eavesOptions.map((option, i) => (
          <li
            key={option}
            role="option"
            aria-selected={i === 0}
            className={`h-[17px] pl-[3px] whitespace-nowrap ${i === 0 ? 'bg-[#cce7ff]' : ''}`}
          >
            {option}
          </li>
        ))}
      </ul>
      <div className="flex w-3.5 flex-col items-center border-l border-[#bdbdbd] bg-[#ececec] py-1">
        <Caret className="rotate-180 text-[#555]" />
        <span className="mt-1.5 h-[72px] w-2 bg-[#bdbdbd]" />
        <span className="flex-1" />
        <Caret className="text-[#555]" />
      </div>
    </div>
    <div className="flex h-[17px] items-center justify-end border-t border-[#bdbdbd] bg-[#f4f4f4] pr-1">
      <Grip />
    </div>
  </div>
)

const OverHeightDialog = () => {
  const rowBorder = 'border-r border-b border-[#bdbdbd]'
  const active = 'border-y-2 border-y-[#0568fd] border-r border-r-[#bdbdbd]'

  return (
    <section
      role="dialog"
      aria-label="设置超高降效"
      className="absolute top-[221px] left-[574px] flex h-[575px] w-[771px] flex-col rounded-md bg-[#f4f4f4] shadow-[0_0_10px_rgba(0,0,0,0.35)]"
    >
      <div className="flex h-[31px] shrink-0 items-center rounded-t-md bg-[#4598ff] px-3 text-sm text-white">
        <h2 className="flex-1">设置超高降效</h2>
        <button aria-label="帮助" className="mr-4 font-bold">
          ?
        </button>
        <button aria-label="关闭对话框" className="-mr-1">
          <Svg className="size-3" box="0 0 12 12">
            <path d="m2 2 8 8M10 2l-8 8" stroke="#fff" strokeWidth="2.200" />
          </Svg>
        </button>
      </div>
      <p className="h-[31px] shrink-0 pl-[9px] leading-9 text-[#222]">请在列表中设置檐高</p>
      <div className="relative mx-[9px] min-h-0 flex-1 border border-[#bdbdbd] bg-white">
        <table className="w-[721px] table-fixed border-separate border-spacing-0 text-[#222] [font-family:'Noto_Sans_Mono_CJK_SC','Noto_Sans_CJK_SC',sans-serif]">
          <thead>
            <tr className="bg-[#e8e8e8]">
              <th className={`h-[23px] w-[115px] p-0 font-normal ${rowBorder}`}>编码</th>
              <th className={`w-[46px] p-0 font-normal ${rowBorder}`}>类别</th>
              <th className={`w-[191px] p-0 font-normal ${rowBorder}`}>名称</th>
              <th className={`w-[221px] border-b-[#0568fd]! bg-[#ffe6c7] p-0 text-[13px] font-bold ${rowBorder}`}>
                檐高类别
              </th>
              <th className={`w-[148px] p-0 font-normal ${rowBorder}`}>超高过滤类别</th>
            </tr>
          </thead>
          <tbody>
            <tr className="bg-[#b3d6fb]">
              <td className={`h-6 border-l-2 border-l-[#0568fd] p-0 ${active}`}>
                <div className="-ml-0.5 h-full">
                  <TreeCode guides={[]} />
                </div>
              </td>
              <td className={`p-0 ${active}`} />
              <td className={`p-0 pl-0.5 ${active}`}>所有项目</td>
              <td className="border-r border-b-2 border-l border-[#0568fd] bg-white p-0">
                <div className="flex items-center justify-between pr-1.5 pb-0.5 pl-[7px]">
                  <input
                    type="text"
                    aria-label="檐高"
                    defaultValue={EAVES}
                    className="h-3.5 w-[175px] bg-[#4598ff] text-white outline-none"
                  />
                  <button aria-label="展开">
                    <Svg className="size-2" box="0 0 8 8">
                      <path d="M0 2h8L4 7z" fill="#666" />
                    </Svg>
                  </button>
                </div>
              </td>
              <td className="border-2 border-l-0 border-[#0568fd] p-0 pl-[3px]">[无]</td>
            </tr>
            {dialogRows.map((row, i) => (
              <tr key={i} className={row.look}>
                <td className={`p-0 ${row.tall ? 'h-[33px]' : 'h-[23px]'} ${rowBorder}`}>{row.code}</td>
                <td className={`p-0 text-center ${rowBorder}`}>{row.kind}</td>
                <td className={`p-0 pl-0.5 ${rowBorder}`}>{row.name}</td>
                <td className={`bg-white p-0 pl-[3px] whitespace-nowrap ${rowBorder}`}>{row.eaves}</td>
                <td className={`bg-white p-0 pl-[3px] ${rowBorder}`}>{row.over}</td>
              </tr>
            ))}
          </tbody>
        </table>
        <EavesDropdown />
      </div>
      <label className="flex h-7 shrink-0 items-center gap-1.5 pl-[9px] text-[#222]">
        <input
          type="checkbox"
          className="size-3.5 appearance-none rounded-xs border border-[#999] bg-white"
        />
        措施项目需要计取超高降效
      </label>
      <div className="flex shrink-0 gap-1.5 px-[9px] pt-1 text-[#222]">
        <button className="mr-auto h-7 w-20 rounded-xs border border-[#bdbdbd] bg-white">高级选项</button>
        <button className="h-7 w-20 rounded-xs bg-[#4598ff] text-white">确定</button>
        <button className="h-7 w-20 rounded-xs border border-[#bdbdbd] bg-white">取消</button>
      </div>
      <div className="flex h-3.5 shrink-0 items-center justify-end pr-0.5">
        <Grip />
      </div>
    </section>
  )
}

const costs = ['工程造价:944', '人工费:270', '材料费:427', '机械费:11', '设备费:0', '主材费:0']

const StatusBar = () => (
  <footer className="flex h-8 shrink-0 items-center border-t border-[#d8d8d8] bg-[#f4f4f4] whitespace-nowrap text-[#222]">
    <span className="w-[234px] border-r border-[#9aa3ad] pl-2.5">工程量清单项目计量规范(2013-山西)</span>
    <span className="w-[267px] border-r border-[#9aa3ad] pl-4">山西省建筑工程预算定额(2018)(一般计税)</span>
    <span className="w-[91px] border-r border-[#9aa3ad] pl-4">建筑工程</span>
    <span className="w-[169px] border-r border-[#9aa3ad] pl-4">晋建标字【2019】62号</span>
    <div className="ml-auto flex items-center gap-2">
      {costs.map((cost) => (
        <span key={cost}>{cost}</span>
      ))}
      <button aria-label="单栏" className="ml-2 flex h-[22px] w-[22px] items-center justify-center rounded-xs border border-[#ccc] bg-white">
        <Svg className="size-4" box="0 0 16 16">
          <rect x="1" y="1.500" width="14" height="13" rx="1" stroke="#888" />
          <path d="M1 5h14v5H1z" fill={BLUE} />
        </Svg>
      </button>
      <span className="mx-0.5 h-6 border-r border-[#aaa]" />
      <button aria-label="上下布局" className="flex h-[22px] w-[22px] items-center justify-center rounded-xs border border-[#ccc] bg-white">
        <Svg className="size-3.5" box="0 0 14 14">
          <rect width="12" height="7" rx="1.500" y="0" x="1" fill={BLUE} />
          <rect width="12" height="5" rx="1.500" y="9" x="1" fill={BLUE} />
        </Svg>
      </button>
      <button aria-label="左右布局" className="ml-0.5">
        <Svg className="size-3.5" box="0 0 14 14">
          <rect width="6" height="12" rx="1" y="1" x="1" fill="#888" />
          <rect width="5" height="12" rx="1" y="1" x="8" fill="#888" />
        </Svg>
      </button>
      <span className="ml-2.5">100%</span>
      <button aria-label="缩小" className="ml-1">
        <Svg className="size-3" box="0 0 12 12">
          <path d="M0 6h12" stroke="#555" strokeWidth="2" />
        </Svg>
      </button>
      <input
        type="range"
        aria-label="缩放"
        min={0}
        max={100}
        defaultValue={30}
        className="ml-2 h-3 w-[101px] appearance-none bg-[linear-gradient(#ccc,#ccc)] bg-[length:100%_2px] bg-center bg-no-repeat [&::-webkit-slider-thumb]:size-3 [&::-webkit-slider-thumb]:appearance-none [&::-webkit-slider-thumb]:rounded-full [&::-webkit-slider-thumb]:border [&::-webkit-slider-thumb]:border-[#666] [&::-webkit-slider-thumb]:bg-white"
      />
      <button aria-label="放大" className="mr-1.5">
        <Svg className="size-3" box="0 0 12 12">
          <path d="M0 6h12M6 0v12" stroke="#555" strokeWidth="2" />
        </Svg>
      </button>
    </div>
  </footer>
)

const GMark = ({ className }: { className: string }) => (
  <Svg className={className} box="0 0 32 32">
    <path
      d="M31 1c-1 5-5 7-10 7-8 0-12 4-12 9 0 6 5 9 10 8 4-1 5-5 2-8 5-1 9 3 8 7-1 5-6 8-13 8C6 32 0 25 1 17 2 8 9 3 17 3c6 0 10 1 14-2z"
      fill="#1690ee"
      stroke="#0a6fd0"
    />
    <path d="M4 18C4 10 10 6 18 6" stroke="#7fd0ff" strokeWidth="1.500" />
  </Svg>
)

const EMark = ({ className }: { className: string }) => (
  <Svg className={className} box="0 0 32 32">
    <circle cx="16" cy="17" r="13" fill="#5bbf1e" stroke="#e8ffe0" strokeWidth="1.500" />
    <path d="M8 18h16c0-11-15-11-15 0 0 8 10 9 14 4" stroke="#fff" strokeWidth="3.500" />
    <path d="M4 26C4 14 20 2 28 3" stroke="#3f9a10" strokeWidth="2" />
  </Svg>
)

const tasks: { name: string; icon: ReactNode }[] = [
  { name: '广联达', icon: <GMark className="size-8" /> },
  {
    name: '同步',
    icon: (
      <Svg className="size-8" box="0 0 32 32">
        <rect width="32" height="32" rx="6" fill="#2b6fff" />
        <path d="M6 10 22 5l5 5-16 5z" fill="#fff" />
        <path d="M13 15h7v12h-5z" fill="#dfe9ff" />
      </Svg>
    ),
  },
  {
    name: '资源管理器',
    icon: (
      <Svg className="size-8" box="0 0 32 32">
        <path d="M1 8V3h10l2 3h7l1 2h10v21H1z" fill="#f7e39a" stroke="#d9b54f" />
        <path d="M4 5h6M14 8h8" stroke="#3fa83a" strokeWidth="2" />
        <path d="M20 7h6" stroke="#c9533a" strokeWidth="2" />
        <path d="M5 30V18h22v12h-4v-7H9v7z" fill="#9fdcf3" stroke="#5cb4d8" />
      </Svg>
    ),
  },
  { name: '浏览器', icon: <EMark className="size-8" /> },
  {
    name: '云计价',
    icon: (
      <span className="flex size-8 items-center justify-center rounded bg-[#ffae10]">
        <CloudMark className="h-5 w-6" color="#fff" />
      </span>
    ),
  },
  {
    name: '帮助',
    icon: (
      <Svg className="size-8" box="0 0 32 32">
        <path d="M5 11h14v19H5z" fill="#fff" stroke="#222" />
        <path d="M8 15h6M8 18h8M8 21h8M8 24h8M8 27h6" stroke="#222" />
        <path d="M12 9q0-7 7-7t7 7q0 4-5 7v4h-4v-6q5-2 5-5 0-3-3-3t-3 3zM16 22h6v4h-6z" fill="#ffee00" stroke="#222" />
      </Svg>
    ),
  },
  {
    name: '预算',
    icon: (
      <span className="flex size-8 items-center justify-center rounded bg-[#3f93fb] text-2xl text-white">
        预
      </span>
    ),
  },
]

const Dots = () => (
  <Svg className="h-8 w-2" box="0 0 8 32">
    <path
      d="M1 1v30M4 1v30M7 1v30"
      stroke="#0c3354"
      strokeWidth="1.500"
      strokeDasharray="1.500 2.500"
    />
  </Svg>
)

const Tray = () => (
  <div className="ml-auto flex items-center gap-2 text-white">
    <Dots />
    <Svg className="ml-0.5 size-4" box="0 0 16 16">
      <path d="M0 6h16v9H0z" fill="#ccc" />
      <path d="M2 8.500h12M2 10.500h12M4 13h8" stroke="#444" strokeDasharray="1.500 .8" />
      <path d="M5 6q0-3 4-3t5-2" stroke="#ccc" />
    </Svg>
    <Svg className="size-4" box="0 0 16 16">
      <circle cx="8" cy="8" r="7.500" fill="#1c2fae" stroke="#c6d3ff" />
      <path d="M5.500 6q0-2.500 2.500-2.500T10.500 6 8 8.500V10M8 11.500v1.500" stroke="#fff" strokeWidth="1.700" />
    </Svg>
    <span className="flex w-3 flex-col items-center gap-2">
      <Svg className="size-2" box="0 0 8 8">
        <path d="M3 3V1h5v4H6M1 3h5v4H1z" stroke="#fff" />
      </Svg>
      <Caret className="text-white" />
    </span>
    <GMark className="size-4" />
    <EMark className="size-4" />
    <span className="flex size-4 items-center justify-center rounded-xs bg-[#ffa51f]">
      <CloudMark className="size-3" color="#fff" />
    </span>
    <Svg className="size-4" box="0 0 16 16">
      <rect width="16" height="16" rx="2" fill="#fff" />
      <path d="M12 4q-5-3-8 2 0 4 6 6" stroke="#2a6fd0" strokeWidth="2.500" />
      <path d="M2 11h12v4H2z" fill="#f58a1f" />
    </Svg>
    <Svg className="size-4" box="0 0 16 16">
      <path d="M2 1h5v5H2zM1 6h7v8H1z" fill="#999" />
      <circle cx="11" cy="11" r="5" fill="#2fa52f" />
      <path d="m8.500 11 2 2 3-4" stroke="#fff" strokeWidth="1.500" />
    </Svg>
    <Svg className="size-4" box="0 0 16 16">
      <circle cx="8" cy="8" r="8" fill="#f2d21b" />
      <circle cx="8" cy="8" r="6" fill="#3aa52a" />
      <path d="M4 8h8M8 4v8" stroke="#ffee3b" strokeWidth="2.500" />
    </Svg>
    <Svg className="size-4" box="0 0 16 16">
      <path d="M1 5h3l5-5v16l-5-5H1z" fill="#c9532f" stroke="#f5c0a0" strokeWidth=".6" />
      <path d="M11 5q2 3 0 6M13 3q3 5 0 10" stroke="#d07050" />
    </Svg>
    <Svg className="size-4" box="0 0 16 16">
      <path d="M1 14v-2M4 14v-4M7 14V8M10 14V5M13.500 14V2" stroke="#fff" strokeWidth="2" />
    </Svg>
    <Svg className="size-4" box="0 0 16 16">
      <path d="M1 5h3l4-4v14l-4-4H1z" fill="#fff" />
      <path d="M10 5q2 3 0 6M12.500 3q3 5 0 10" stroke="#fff" />
    </Svg>
    <div className="relative ml-2 text-center leading-[17px]">
      11:50 周日
      <br />
      2024/4/21
      <span className="absolute -top-0.5 -right-2 flex size-2.5 items-center justify-center rounded-full bg-[#f01818] text-[8px] leading-[10px]">
        1
      </span>
    </div>
    <Svg className="ml-3 size-4" box="0 0 16 16">
      <path d="M0 1h16v14H0z" fill="#fff" />
      <path d="M6 5v6l4-3z" fill="#123" />
    </Svg>
    <button aria-label="显示桌面" className="ml-1 h-10 w-3.5 border border-[#0c2746] bg-linear-to-b from-[#5f87ad] to-[#224b78]" />
  </div>
)

const Taskbar = () => (
  <footer className="flex h-10 shrink-0 items-center border-t border-[#0f3658] bg-[linear-gradient(40deg,transparent_67.4%,#9ecbf5_68.3%,#9ecbf5_68.7%,transparent_69.6%),linear-gradient(90deg,#1b5f94_0%,#2277b0_4%,#3d9ad4_20%,#3b97d4_42%,#2a80c6_55%,#1c68b2_66%,#2068b4_75%,#17497d_78%,#153f6c_100%)] pl-2">
    <button aria-label="开始">
      <Svg className="size-9" box="0 0 36 36">
        <circle cx="18" cy="18" r="17.500" fill="#1d5f96" stroke="#9cc8e8" />
        <path d="M3 14a15 15 0 0 1 30 0q-15 6-30 0z" fill="#6fa9d4" opacity=".7" />
        <path d="M9 11q4-3 8-1l-1 8q-4-2-8 0z" fill="#f0642a" />
        <path d="M19 11q4 2 9-1l-2 8q-4 3-8 1z" fill="#8cc63f" />
        <path d="M8 20q4-2 8 0l-1 7q-4-2-8 0z" fill="#39a0e8" />
        <path d="M18 21q4 2 8-1l-2 8q-4 2-7 0z" fill="#fcc92f" />
      </Svg>
    </button>
    <div className="mr-2.5 ml-3.5">
      <Dots />
    </div>
    <div className="flex gap-[3px]">
      {tasks.map((task) => (
        <button
          key={task.name}
          aria-label={task.name}
          className={`flex h-[38px] w-[59px] items-center justify-center rounded-xs border border-[#cfe8f8]/70 bg-linear-to-br ring-1 ring-[#0e3f66] ${
            task.name === '预算' ? 'from-[#d9eefa] to-[#74b9e4]' : 'from-[#9ccbe8]/80 to-[#3d94cb]/60'
          }`}
        >
          {task.icon}
        </button>
      ))}
    </div>
    <Tray />
  </footer>
)

export default function App() {
  return (
    <div className="relative flex h-screen w-full flex-col overflow-hidden bg-white text-xs [font-family:'Noto_Sans','Noto_Sans_CJK_SC',sans-serif]">
      <TitleBar />
      <MenuBar />
      <Ribbon />
      <PageTabs />
      <main className="min-h-0 flex-1 overflow-hidden bg-white">
        <MainTable />
      </main>
      <DetailPane />
      <StatusBar />
      <Taskbar />
      <QueryWindow />
      <OverHeightDialog />
    </div>
  )
}
